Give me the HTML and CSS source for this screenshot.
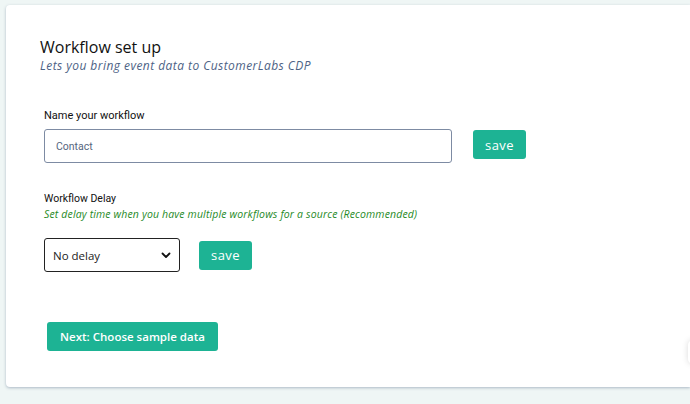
FILE: index.html
```html
<!DOCTYPE html>
<html lang="en">
<head>
    <meta charset="UTF-8">
    <meta name="viewport" content="width=device-width, initial-scale=1.0">
    <title>Workflow set up</title>
    <link rel="stylesheet" href="styles.css">
</head>
<body>
    <div class="card">
        <div class="header">
            <h1>Workflow set up</h1>
            <p class="subtitle">Lets you bring event data to CustomerLabs CDP</p>
        </div>

        <div class="field">
            <label for="workflowName">Name your workflow</label>
            <div class="row">
                <input type="text" id="workflowName" value="Contact">
                <button class="btn save-name">save</button>
            </div>
        </div>

        <div class="field delay">
            <label class="delay-label">Workflow Delay</label>
            <p class="hint">Set delay time when you have multiple workflows for a source (Recommended)</p>
            <div class="row">
                <div class="select">
                    <span>No delay</span>
                    <svg width="10" height="7" viewBox="0 0 10 7"><path d="M1.5 1.5 L5 5 L8.5 1.5" fill="none" stroke="#111" stroke-width="1.8" stroke-linecap="round" stroke-linejoin="round"/></svg>
                </div>
                <button class="btn save-delay">save</button>
            </div>
        </div>

        <button class="btn next">Next: Choose sample data</button>
    </div>
    <div class="widget"></div>
</body>
</html>
```

FILE: styles.css
```css
body {
    margin: 0;
    padding: 5px 0 0 6px;
    background-color: #eff6f5;
    font-family: "Open Sans", sans-serif;
    overflow: hidden;
    height: 404px;
    box-sizing: border-box;
}
.card {
    background-color: #fff;
    border-radius: 4px 0 0 4px;
    box-shadow: 0 1px 3px rgba(90, 110, 140, 0.45);
    height: 382px;
    box-sizing: border-box;
    padding: 31px 0 0 34px;
}
h1 {
    margin: 0;
    font-weight: 400;
    font-size: 16px;
    line-height: 22px;
    color: #111;
}
.subtitle {
    margin: 0;
    font-size: 12px;
    font-style: italic;
    color: #4d6285;
    line-height: 16px;
    letter-spacing: 0.45px;
}
.field {
    margin-top: 35px;
    padding-left: 4px;
}
label {
    display: block;
    font-family: "Roboto", sans-serif;
    font-size: 11px;
    color: #111;
    line-height: 14px;
}
.row {
    display: flex;
    align-items: center;
}
input {
    margin-top: 6px;
    width: 408px;
    height: 34px;
    box-sizing: border-box;
    border: 1px solid #7d8ba3;
    border-radius: 3px;
    padding: 0 11px;
    font-family: "Roboto", sans-serif;
    font-size: 10.5px;
    color: #56657e;
    outline: none;
}
.btn {
    background-color: #1db394;
    color: #fff;
    border: none;
    border-radius: 3px;
    font-family: "Open Sans", sans-serif;
    font-size: 13px;
    letter-spacing: 0.4px;
    cursor: pointer;
    padding: 0;
}
.save-name {
    margin: 3px 0 0 21px;
    width: 53px;
    height: 29px;
}
.delay {
    margin-top: 29px;
}
.delay-label {
    font-size: 10.5px;
}
.hint {
    margin: 1px 0 0;
    font-size: 10.5px;
    font-style: italic;
    color: #1f8a1f;
    line-height: 14px;
    letter-spacing: 0.15px;
}
.select {
    margin-top: 17px;
    width: 136px;
    height: 34px;
    box-sizing: border-box;
    border: 1px solid #222;
    border-radius: 3px;
    display: flex;
    align-items: center;
    justify-content: space-between;
    padding: 0 8px 0 8px;
    font-size: 11.5px;
    color: #222;
}
.save-delay {
    margin: 17px 0 0 19px;
    width: 53px;
    height: 29px;
}
.next {
    margin: 50px 0 0 7px;
    width: 171px;
    height: 29px;
    font-weight: 600;
    font-size: 11.5px;
    letter-spacing: 0;
}
.widget {
    position: absolute;
    right: -8px;
    top: 340px;
    width: 10px;
    height: 24px;
    border-radius: 5px;
    box-shadow: 0 0 6px rgba(0, 0, 0, 0.15);
    background: #fff;
}
```
